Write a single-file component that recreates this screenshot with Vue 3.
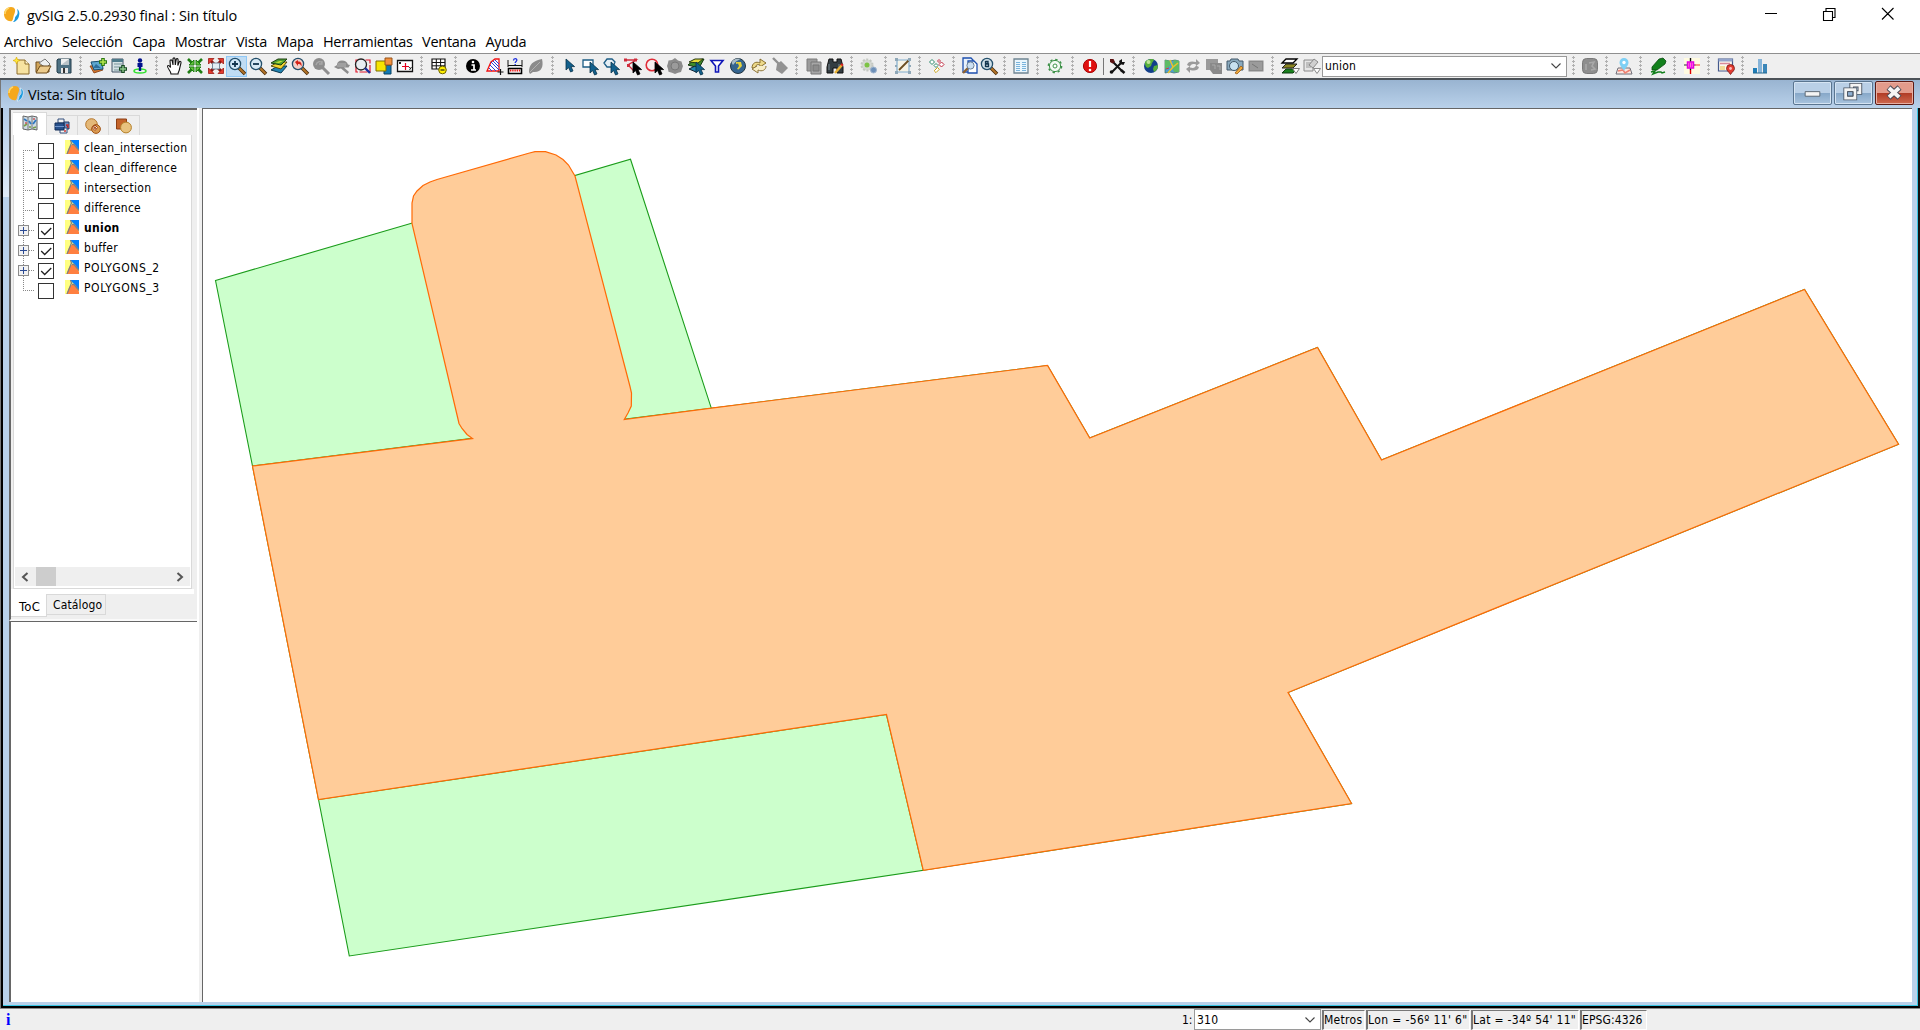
<script setup>
import { ref } from 'vue'

const lens = (fill, inner = '', handle = '#b5762a', edge = '#234f6b') =>
  `<path d="M12 12l6 6" stroke="#4a2c08" stroke-width="3.6"/><path d="M12 12l5.6 5.6" stroke="${handle}" stroke-width="2"/><circle cx="8" cy="8" r="5.6" fill="${fill}" stroke="${edge}" stroke-width="1.3"/>${inner}`
const cursor = (x, y, fill = '#12608c', edge = '#08324a') =>
  `<path transform="translate(${x} ${y})" d="M0 0v11l2.6-2.4 2 4.4 2.4-1.1-2-4.3h3.6z" fill="${fill}" stroke="${edge}" stroke-width=".8"/>`

const icons = {
  fresh: '<path d="M5 4h8l4 4v10H5z" fill="#f7e3a1" stroke="#8d6c2a"/><path d="M13 4v4h4" fill="#fff6d5" stroke="#8d6c2a"/><path d="M4.500 1l1 2.500 2.500 1-2.500 1-1 2.500-1-2.500-2.500-1 2.500-1z" fill="#ffe93b" stroke="#d9a800" stroke-width=".6"/>',
  open: '<path d="M3 16V6h4l1 2h8v8z" fill="#cfa45b" stroke="#6d4b1b"/><path d="M6 7l6-4 5 5-4 4z" fill="#eef0f0" stroke="#777"/><path d="M3 17l4-7h11l-4 7z" fill="#eccb8c" stroke="#6d4b1b"/>',
  save: '<path d="M4 3h13v14H4l-1-1V4z" fill="#4d7183" stroke="#253f4d"/><path d="M7 3h8v6H7z" fill="#eef0f0"/><path d="M7 9l8-6v6z" fill="#b9c3c8"/><path d="M7 12h7v5H7z" fill="#e8e8e8"/><path d="M9 12h2v5H9z" fill="#333"/>',
  addLayer: '<path d="M2 10l10-1 3 5-9 3z" fill="#d9752a" stroke="#7d3b10" stroke-width=".8"/><path d="M3 6l11-1 1 8-9 1z" fill="#5ea7cf" stroke="#174e70"/><path d="M5 12l3-4 5 4z" fill="#2d6f9c"/><path d="M15 2v8M11 6h8" stroke="#2c7a12" stroke-width="3.600"/><path d="M15 3v6M12 6h6" stroke="#b4e44e" stroke-width="1.600"/>',
  addTable: '<path d="M3 3h11v13H3z" fill="#d6e2e4" stroke="#456"/><path d="M3 3h11v3H3z" fill="#4f7b8b"/><path d="M5 8h8M5 11h8M5 14h6" stroke="#7a959c"/><path d="M14 9v8M10 13h8" stroke="#174a22" stroke-width="3.600"/><path d="M14 10v6M11 13h6" stroke="#8fc98c" stroke-width="1.400"/>',
  person: '<path d="M10 13c4 0 6 1 6 2s-2 2-6 2-6-1-6-2 2-2 6-2z" fill="none" stroke="#2fe02f" stroke-width="1.500"/><circle cx="10" cy="4.500" r="2.200" fill="#00108c"/><path d="M7.500 7h5v4h-1.300v4H8.800v-4H7.500z" fill="#00108c"/>',
  hand: '<path transform="translate(1 0)" d="M6 18c0-3-4-6-3.500-8 1-1.500 2.500.5 3 1.500L5 5c0-1.500 2-1.500 2.200 0L8 9V3c0-1.500 2-1.500 2 0l.3 6 .9-5.500c.3-1.500 2-1 1.900.4L12.800 9.500l1.400-3.500c.6-1.300 2.200-.6 1.800.8L14.500 13c0 2-1.500 3-1.500 5z" fill="#fff" stroke="#111" stroke-width="1.100"/>',
  fit: '<path d="M3 3l5 5M17 3l-5 5M3 17l5-5M17 17l-5-5" stroke="#1f7d13" stroke-width="2.600"/><path d="M9 4v5H4zM11 4v5h5zM9 16v-5H4zM11 16v-5h5z" fill="#62c63a" stroke="#1f7d13"/>',
  expand: '<path d="M4 4l4 4M16 4l-4 4M4 16l4-4M16 16l-4-4" stroke="#8d1410" stroke-width="3"/><path d="M2.500 2.500h5.500l-5.500 5.500zM17.500 2.500h-5.500l5.500 5.500zM2.500 17.500h5.500l-5.500-5.500zM17.500 17.500h-5.500l5.500-5.500z" fill="#e33b2e" stroke="#9c1a14" stroke-width=".8"/><path d="M6.500 7h7v6h-7z" fill="#e4eef4" stroke="#789"/>',
  zoomIn: lens('#cfe6f6', '<path d="M8 5v6M5 8h6" stroke="#12354e" stroke-width="1.800"/>'),
  zoomOut: lens('#d7e9f4', '<path d="M5 8h6" stroke="#12354e" stroke-width="1.800"/>'),
  layers: '<path d="M2 14l7-4h9l-6 7z" fill="#2183b0" stroke="#0d3850"/><path d="M2 10l7-4h9l-6 7z" fill="#f4d62f" stroke="#534a10"/><path d="M2 7l7-4h9l-6 6z" fill="#4f9e31" stroke="#1d3f10"/><path d="M6 6.500l5-1.500 3 0-4 2z" fill="#c7e23a"/>',
  zoomPrev: lens('#f3cfc8', '<path d="M5 6l3-2v1.500c3 0 4 2 3.500 5C10.500 8.500 10 8 8 8v2z" fill="#d42217"/>'),
  zoomGrey: '<path d="M11 11l7 7" stroke="#8f8f8f" stroke-width="3"/><circle cx="8" cy="8" r="6" fill="#8d8d8d"/><path d="M5 9c1-4 5-4 6-2M11 5v3H8" fill="none" stroke="#a8a8a8" stroke-width="1.400"/>',
  turtle: '<path d="M2 11l3-2c0-3 2-4.500 5-4.500s5 1.500 6 4l2 .5-1.500 2.500H12l5 4.500-1.500 2L9 12.500 6 13z" fill="#8c8c8c"/><path d="M6 8h8M5 10h9" stroke="#b4b4b4"/>',
  zoomSel: '<path d="M3 4h14v12H3z" fill="none" stroke="#e0182c" stroke-width="1.200" stroke-dasharray="8 1.500"/><circle cx="8" cy="8.500" r="5.500" fill="#e8eef2" stroke="#222" stroke-width="1.300"/><path d="M12 12l5 5" stroke="#1b2f9a" stroke-width="2.400"/>',
  frames: '<path d="M10 9h7v9h-7z" fill="#1179b3" stroke="#084264"/><path d="M2 5h10v10H2z" fill="#f6e500" stroke="#7a6d00"/><path d="M11 2h7v7h-7z" fill="#f2913d" stroke="#96521a"/>',
  coords: '<path d="M2.500 4.500h15v11h-15z" fill="#fff" stroke="#111" stroke-width="1.300"/><path d="M10.500 7v7M7 10.500h7" stroke="#e3001b" stroke-width="1.200"/><path d="M4 6l2 2M6 6L4 8M14 11l1.200 1.500M16.500 11l-2 3" stroke="#111" stroke-width=".9"/>',
  grid: '<path d="M3 3h13v10H3z" fill="#fff" stroke="#111" stroke-width="1.200"/><path d="M3 6.500h13M3 9.800h13M7.300 3v10M11.600 3v10" stroke="#111"/><circle cx="13.500" cy="14" r="3.800" fill="#ffef00" stroke="#6b6200"/><path d="M11.500 14h4" stroke="#222" stroke-width="1.200"/>',
  info: '<circle cx="10" cy="10" r="7" fill="#000"/><path d="M8.500 9h2.500v5M8 14h5" stroke="#fff" stroke-width="1.700" fill="none"/><circle cx="10" cy="6" r="1.300" fill="#fff"/>',
  area: '<path d="M3 15l4-9 4-3h4v12z" fill="#fff" stroke="#f01414" stroke-width="1.300"/><path d="M6 9l6 6M7 6l8 8M9 5l6 6M11 4l4 4M5 12l3 3" stroke="#2f3ed6"/><path d="M16.500 13v6M13.500 16h6" stroke="#111" stroke-width="1.200"/>',
  measure: '<path d="M3.500 12.500h13v5h-13z" fill="#fff" stroke="#000" stroke-width="1.600"/><path d="M5 14.500h10" stroke="#e81a1a" stroke-width="2" stroke-dasharray="1.400 .8"/><path d="M3 4v7M17 4v7M3 9.500h14" stroke="#111"/><path d="M8.500 4.500C8.500 2 12 2 11.800 4.300c0 1.200-1.600 1.200-1.600 2.700M10.200 8v1" fill="none" stroke="#1d2fe0" stroke-width="1.300"/>',
  leaf: '<path d="M3 16c0-8 4-11 13-13 2 8-1 14-9 13l-3 2z" fill="#8b8b8b"/><path d="M4 16L14 6" stroke="#b1b1b1"/>',
  pointer: cursor(6, 3),
  selRect: '<path d="M2 4h10v7H2z" fill="#fff" stroke="#1d5d85" stroke-width="1.300"/>' + cursor(9, 6),
  selPoly: '<path d="M2 7l3-4h5l3 3-2 5H5z" fill="#e4eef4" stroke="#1d5d85" stroke-width="1.300"/>' + cursor(9, 6),
  selLine: '<path d="M2 4h11L5 9l6 6" fill="none" stroke="#cf2d3c" stroke-width="1.400"/><path d="M1 2.500h3v3H1zM11 2.500h3v3h-3zM4 8h3v3H4z" fill="#cf2d3c"/>' + cursor(10, 6, '#000', '#000'),
  selCircle: '<circle cx="8" cy="9" r="5.800" fill="#f6eeee" stroke="#e12c38" stroke-width="1.600"/>' + cursor(11, 6, '#000', '#000'),
  greyDot: '<path d="M10 2l3 2.500 3.500 1 1 3.500L18 10l-1 3-1 3-3 .8L10 18l-3-1.200-3.500-1L3 13l-1-3 1-3 .5-2.500L7 4z" fill="#8c8c8c"/><circle cx="10" cy="10" r="4" fill="#9b9b9b" stroke="#777"/>',
  selLayers: '<path d="M2 9l6-5 10-1-5 9z" fill="#3e8b2a" stroke="#14300e"/><path d="M3 6l6-3h8l-5 4z" fill="#e8db3a" stroke="#253b10"/><path d="M3 13l6-3 5 3-4 3z" fill="#2183b0" stroke="#123"/>' + cursor(10, 6),
  funnel: '<path d="M4 4.500h12L11.500 10v6h-3v-6z" fill="#fff" stroke="#0f16b8" stroke-width="1.600"/>',
  globe: '<circle cx="10" cy="10" r="7.500" fill="#34648f" stroke="#23343f"/><path d="M3.500 6.500a7.500 7.500 0 0 1 9-3.500L8 5.500 5 9z" fill="#a9bcc8"/><path d="M8 6l5 0 1 4-3.500 3.500L9 13l2-3-1-2.500-2 .5z" fill="#e3d13c"/>',
  cycle: '<path d="M3 12c0-5 4-7 8-5V3l6 4-6 4V9c-3-1-4 0-5 3z" fill="#edd98a" stroke="#7d6320" stroke-width=".9"/><path d="M17 10c0 4-4 6-8 4v3l-6-4 5-3" fill="#f7edc6" stroke="#8d743a"/>',
  broom: '<path d="M3 2l6 6" stroke="#909090" stroke-width="2.400"/><path d="M7 8l4-3 7 7-6 6-6-4z" fill="#929292"/>',
  copies: '<path d="M3 3h10v12H3z" fill="#9b9b9b" stroke="#7d7d7d"/><path d="M7 6h10v12H7z" fill="#a6a6a6" stroke="#777"/><path d="M9 9h6v6H9z" fill="#8d8d8d" stroke="#777"/>',
  binoc: '<path d="M4 3h4v3h4V3h4l2 8v6h-6v-5H8v5H2v-6z" fill="#333d42" stroke="#111"/><path d="M4 8v6M14 8v5" stroke="#78868d"/><path d="M10 17l7-8" stroke="#e9b236" stroke-width="2.400"/><path d="M16 8l2 1.500" stroke="#d22" stroke-width="2"/>',
  gears: '<circle cx="8" cy="9" r="5.500" fill="#d4d8d2" stroke="#c4c8c2" stroke-dasharray="2 1.500" stroke-width="2"/><circle cx="8" cy="9" r="2.500" fill="#7cc344"/><circle cx="14.500" cy="14" r="3" fill="#6d90b8" stroke="#9fb4ce"/>',
  editBox: '<path d="M4 4h12v12H4z" fill="#f6f3e6" stroke="#80add0" stroke-width="1.200"/><path d="M6 14L16 4" stroke="#6a4d20" stroke-width="1.800"/><path d="M2 2h3v3H2zM15 2h3v3h-3zM2 15h3v3H2zM15 15h3v3h-3zM2 9h2v2H2zM16 9h2v2h-2z" fill="#8fa8b8"/>',
  nodes: '<g fill="#fff" stroke-width="1"><path d="M5 3.500l2.500 2.500L5 8.500 2.500 6z" stroke="#2b8a6a"/><path d="M9 7.500l2 2-2 2-2-2z" stroke="#2b8a6a"/><path d="M14.500 6l2.500 2.500-2.500 2.500L12 8.500z" stroke="#c02a40"/><path d="M12 3.500l1.500 1.500L12 6.500 10.500 5z" stroke="#c02a40"/><path d="M10.500 11.500l1.800 1.800-3.300 3.300-1.800-1.800z" stroke="#caa41a"/></g>',
  docZoom: '<path d="M3 2h8l2 2v12H3z" fill="#e9f1fb" stroke="#1d4fae" stroke-width="1.300"/><path d="M8 5h6l3 3v9H8z" fill="#fff" stroke="#1d4fae" stroke-width="1.300"/><path d="M8 12l-5 5" stroke="#8c6232" stroke-width="2.400"/><circle cx="10.500" cy="9.500" r="3.600" fill="#cde0f3" stroke="#6b7f96"/>',
  boldZoom: lens('#cfe0e8', '<path d="M6.500 5v6M6.500 5.500h2.500v2H6.500M6.500 8h3v2.500h-3" fill="none" stroke="#12354e" stroke-width="1.300"/>'),
  table: '<path d="M3 3h14v14H3z" fill="#eaf6fd" stroke="#6f8592" stroke-width="1.300"/><path d="M5 6.500h4M5 8.500h4M5 10.500h4M5 12.500h4M5 14.500h4M11 6.500h4M11 8.500h4M11 10.500h4M11 12.500h4M11 14.500h4" stroke="#79b4dc"/>',
  gear: '<circle cx="10" cy="10" r="5.600" fill="#f4faf4" stroke="#3d9148" stroke-width="1"/><circle cx="10" cy="10" r="6.600" fill="none" stroke="#3d9148" stroke-width="1.500" stroke-dasharray="2.400 2.780"/><circle cx="10" cy="10" r="2" fill="#fff" stroke="#3d9148"/>',
  alert: '<circle cx="10" cy="10" r="6.600" fill="#e01010" stroke="#a80808"/><path d="M10 5v6" stroke="#fff" stroke-width="2.200"/><circle cx="10" cy="14" r="1.300" fill="#fff"/>',
  tools: '<path d="M4.500 16.500L14 7M6 6l9 9" stroke="#111" stroke-width="2"/><path d="M3 3l3.500 0 1.500 3-2.500 1.500L3 6z" fill="#5a1010"/><path d="M13 8l-1-3 3-2v3l3 0-1.500 3z" fill="#111"/><circle cx="4.500" cy="16" r="1.800" fill="#111"/><path d="M14 14l3.500 3" stroke="#111" stroke-width="2.600"/>',
  earth: '<circle cx="10" cy="10" r="7" fill="#123f8a"/><path d="M4 6c2-3 8-4 9-2l-2 3-1 3-3 2c-3-1-3-4-3-6zM13 10l4-1c0 4-2 6-4 7l-1-3z" fill="#58b03a"/><circle cx="7.500" cy="6" r="2" fill="#d8f0b0" opacity=".8"/>',
  worldMap: '<path d="M3 4l5 1 5-1 4 1v11l-5 1-4-1-5 1z" fill="#4f9fd0" stroke="#3d6d5a" stroke-width=".7"/><path d="M3 4l5 1 0 5-5 3zM12 4l5 1v11h-5l-2-5z" fill="#5fbb65"/><path d="M8 4l3 7 5-4M11 11l-5 6" stroke="#e9c22c" stroke-width="1.500" fill="none"/><path d="M4 13l3-1" stroke="#d33"/>',
  syncGrey: '<path d="M4 9c1-4 5-4 9-3V3l4 4-4 3V8.500c-4-1-5 0-6 2zM16 11c-1 4-5 4-9 3v3l-4-4 4-3v1.500c4 1 5 0 6-2z" fill="#9a9a9a"/>',
  stackGrey: '<path d="M2 3h12v11H2z" fill="#9a9a9a"/><path d="M6 7h12v11H9l-3-4z" fill="#8a8a8a"/><path d="M8 9h3v4M13 10h3v4" fill="none" stroke="#aaa"/>',
  camera: '<path d="M2 5h3l1-2h7l1 2h4v9H2z" fill="#89a9bd" stroke="#42596a"/><circle cx="9" cy="10" r="4.500" fill="#c7e1f0" stroke="#42596a"/><path d="M10 17l6-7 2 2-6 6z" fill="#f0a93c" stroke="#995c12" stroke-width=".8"/>',
  cardGrey: '<path d="M2.500 4.500h15v11h-15z" fill="#8a8a8a"/><path d="M4 6h12v8H4z" fill="#9b9b9b"/><path d="M6 8l6 4" stroke="#777"/>',
  stack: '<path d="M2 17l4-4h11l-4 4z" fill="#18801c" stroke="#0d3a10"/><path d="M2 12l4-4h11l-4 4z" fill="#8a8420" stroke="#222"/><path d="M2 7l4-4h11l-4 4z" fill="#fff" stroke="#000" stroke-width="1.300"/><path d="M12.500 12.500h7l-3.500 5z" fill="#fff" stroke="#777"/>',
  stackEdit: '<path d="M3 4h9v11H3z" fill="#e6e6e6" stroke="#8a8a8a"/><path d="M5 7h5M5 9h5M5 11h5" stroke="#999"/><path d="M8 9l5-6 4 3-5 6z" fill="#d0d0d0" stroke="#8a8a8a"/><path d="M12.500 12.500h7l-3.500 5z" fill="#fff" stroke="#888"/>',
  greyBlock: '<rect x="2.500" y="2.500" width="15" height="15" rx="4" fill="#8e8e8e" stroke="#7a7a7a"/><path d="M6 8v6M9 7l5-1-2 4 3 3-4 1" fill="none" stroke="#a9a9a9" stroke-width="1.600"/>',
  pinMap: '<path d="M4 12h12l2 6H2z" fill="#fbe7e0" stroke="#6f6f78"/><path d="M4 15l5-1 2 3 5-3" stroke="#f08070" fill="none" stroke-width="1.600"/><path d="M10 15C8 11 5.500 9.500 5.500 6.500a4.500 4.500 0 0 1 9 0C14.500 9.500 12 11 10 15z" fill="#7fd0f5"/><circle cx="10" cy="6.500" r="1.700" fill="#fff"/>',
  marker: '<path d="M4 11L11 3l4-1 3 3-1 3-8 6H4z" fill="#12801c" stroke="#0a4a10" stroke-width=".8"/><path d="M3 16l4-1-2 3 5-2 3 0 1 1 3-1" fill="none" stroke="#12801c" stroke-width="1.500"/>',
  snap: '<path d="M2 2h16v16H2z" fill="#fffbe0"/><path d="M8.500 2v12" stroke="#111" stroke-width="1.400"/><path d="M8.500 14v4" stroke="#e00000" stroke-width="1.400"/><path d="M2 9h12" stroke="#777" stroke-width="1.600"/><path d="M13 9h5" stroke="#f08070" stroke-width="1.600"/><path d="M5.500 6h6v6h-6z" fill="#f7c" stroke="#e000e0" stroke-width="1.500"/><path d="M7.500 7v4M9.500 7v4" stroke="#f0f"/>',
  formPin: '<path d="M2.500 3h14v12h-14z" fill="#fbf7ee" stroke="#44598c" stroke-width="1.200"/><path d="M2.500 3h14v2.500h-14z" fill="#93a4cc"/><path d="M4 7.500h10" stroke="#d98a9a" stroke-width="1.500"/><path d="M4 10h5v4H4z" fill="#f2dc9a"/><path d="M14.500 18.500c-2-3-4-4-4-6a4 4 0 0 1 8 0c0 2-2 3-4 6z" fill="#e23a30" stroke="#761814" stroke-width=".8"/><circle cx="14.500" cy="12.500" r="1.400" fill="#fbb"/>',
  bars: '<path d="M3 12h4v5H3z" fill="#1f7db6"/><path d="M8 3h4v14H8z" fill="#86b4d8"/><path d="M13 8h4v9h-4z" fill="#3b86b8"/><path d="M3 17h14" stroke="#23698f"/>'
}

const toolbars = [
  ['fresh', 'open', 'save'],
  ['addLayer', 'addTable', 'person'],
  ['hand', 'fit', 'expand', 'zoomIn', 'zoomOut', 'layers', 'zoomPrev', 'zoomGrey', 'turtle', 'zoomSel', 'frames', 'coords'],
  ['grid'],
  ['info', 'area', 'measure', 'leaf'],
  ['pointer', 'selRect', 'selPoly', 'selLine', 'selCircle', 'greyDot', 'selLayers', 'funnel', 'globe', 'cycle', 'broom'],
  ['copies', 'binoc'],
  ['gears'],
  ['editBox'],
  ['nodes'],
  ['docZoom', 'boldZoom'],
  ['table'],
  ['gear'],
  ['alert', '|', 'tools'],
  ['earth', 'worldMap', 'syncGrey', 'stackGrey', 'camera', 'cardGrey'],
  ['stack', 'stackEdit', 'combo'],
  ['greyBlock'],
  ['pinMap'],
  ['marker'],
  ['snap'],
  ['formPin'],
  ['bars']
]

const menus = ['Archivo', 'Selección', 'Capa', 'Mostrar', 'Vista', 'Mapa', 'Herramientas', 'Ventana', 'Ayuda']

const layers = ref([
  { name: 'clean_intersection', on: false },
  { name: 'clean_difference', on: false },
  { name: 'intersection', on: false },
  { name: 'difference', on: false },
  { name: 'union', on: true, active: true },
  { name: 'buffer', on: true },
  { name: 'POLYGONS_2', on: true },
  { name: 'POLYGONS_3', on: false }
])
</script>

<template>
  <div class="app">
    <header class="titlebar">
      <svg class="logo" viewBox="0 0 16 16"><path d="M7 0c4 0 5 3 3.500 6.500S9.500 12 8 14c-4 1-8-2-8-7 0-4 3-7 7-7z" fill="#f5a81c"/><path d="M5 1c-3 1-4 3-4 6" stroke="#ffd86b" stroke-width="1.500" fill="none"/><path d="M13 2c2 1 3 4 2 7-1 4-4 6-6 6 3-3 1-4 3-6s2-4 1-7z" fill="#1c9ade"/></svg>
      <span class="title">gvSIG 2.5.0.2930 final : Sin título</span>
      <svg class="winctl" viewBox="0 0 140 20"><path d="M5 8.500h12M63.500 6.500h9v9h-9zM66 6V3.500h9v9h-2.500M122 3l11.500 11.500M133.500 3L122 14.500" fill="none" stroke="#000" stroke-width="1.100"/></svg>
    </header>
    <nav class="menubar"><span v-for="m in menus" :key="m">{{ m }}</span></nav>

    <div class="toolbar">
      <div v-for="(group, g) in toolbars" :key="g" class="group" :class="'g' + g">
        <i class="grip"></i>
        <template v-for="name in group" :key="name">
          <i v-if="name === '|'" class="sep"></i>
          <div v-else-if="name === 'combo'" class="combo">
            <span>union</span>
            <svg viewBox="0 0 10 6"><path d="M.5.500L5 5 9.500.500" fill="none" stroke="#444" stroke-width="1.100"/></svg>
          </div>
          <span v-else class="tool" :class="{ active: name === 'zoomIn' }">
            <svg viewBox="0 0 20 20" fill="none" v-html="icons[name]"></svg>
          </span>
        </template>
      </div>
    </div>

    <main class="frame">
      <div class="frame-title">
        <svg class="logo" viewBox="0 0 16 16"><path d="M7 0c4 0 5 3 3.500 6.500S9.500 12 8 14c-4 1-8-2-8-7 0-4 3-7 7-7z" fill="#f5a81c"/><path d="M5 1c-3 1-4 3-4 6" stroke="#ffd86b" stroke-width="1.500" fill="none"/><path d="M12 2c3 1 4 4 3 7-1 4-4 6-6 6 3-3 1-4 3-6s1-4 0-7z" fill="#1c9ade" stroke="#fff" stroke-width=".6"/></svg>
        <span class="title">Vista: Sin título</span>
        <div class="frame-ctl">
          <b><svg viewBox="0 0 39 24"><path d="M11.500 10.500h16v5h-16z" fill="#f4f4f4" stroke="#55606c"/></svg></b>
          <b><svg viewBox="0 0 39 24"><g fill="none"><path d="M17.500 3.500h9v8h-9z" stroke="#4b5563" stroke-width="5"/><path d="M17.500 3.500h9v8h-9z" stroke="#f4f4f4" stroke-width="3"/><path d="M11 8.500h10v9H11z" fill="#8fb0d2" stroke="#4b5563" stroke-width="5"/><path d="M11 8.500h10v9H11z" stroke="#f4f4f4" stroke-width="3.200"/><path d="M13 10.500h6v5h-6z" stroke="#4b5563"/></g></svg></b>
          <b class="close"><svg viewBox="0 0 39 24"><path d="M13 6l12 11M25 6L13 17" stroke="#4a4a55" stroke-width="6.400"/><path d="M13.500 6.500l11 10M24.500 6.500l-11 10" stroke="#f6f6f6" stroke-width="4.300"/></svg></b>
        </div>
      </div>

      <div class="frame-body">
        <aside class="side">
          <section class="toc">
            <div class="tabs">
              <span class="tab on"><svg viewBox="0 0 16 16"><path d="M1 1l5 1 4-1 5 1v13l-5-1-4 1-5-1z" fill="#cfdce4" stroke="#666"/><path d="M6 2v13M10 1v13" stroke="#777"/><path d="M2 4l3 2M7 6l2 3M11 9l3-4" stroke="#2f77c0" stroke-width="1.800"/><path d="M2 11l3-2M11 13l3-1M7 12l2 0" stroke="#78a04a" stroke-width="1.600"/><path d="M4 7v2M12 3v2" stroke="#c44" stroke-width="1.300"/></svg></span>
              <span class="tab"><svg viewBox="0 0 16 16"><path d="M4 1h6v4H4z" fill="#f3f3f3" stroke="#334f7c"/><path d="M10 4h5v7h-5z" fill="#6f8fc0" stroke="#233c66"/><path d="M6 10h7v5H6z" fill="#f6f6f6" stroke="#334f7c"/><path d="M1 5h9v7H1z" fill="#27508c" stroke="#152e58"/><path d="M1 8.500h9" stroke="#7095cc"/><path d="M12 7h2v3M10 13h2" stroke="#c33" stroke-width="1.500"/></svg></span>
              <span class="tab"><svg viewBox="0 0 16 16"><circle cx="6.500" cy="6.500" r="5.800" fill="#e4b878" stroke="#b5762a"/><circle cx="11" cy="11" r="4.400" fill="#d99a50" stroke="#a3561a"/><path d="M10 7l2.500 2.500L10 12.500 7.500 10z" fill="#fff" stroke="#a3461a"/><circle cx="10" cy="9.800" r="1.200" fill="#b3541c"/></svg></span>
              <span class="tab"><svg viewBox="0 0 16 16"><path d="M.5 1h10v10H.5z" fill="#c4642a" stroke="#8d3f14"/><circle cx="10" cy="9.500" r="5.400" fill="#e8c27e" stroke="#b5812a"/></svg></span>
            </div>
            <div class="tree-pane">
              <ul class="tree">
                <li v-for="l in layers" :key="l.name" :class="{ active: l.active }">
                  <span class="branch"><i v-if="l.on" class="plus"></i></span>
                  <span class="check"><svg v-if="l.on" viewBox="0 0 16 16"><path d="M2.500 8l4 4L14 4.500" fill="none" stroke="#222" stroke-width="1.500"/></svg></span>
                  <svg class="sym" viewBox="0 0 14 14"><path d="M0 0h14v14H0z" fill="#ffff80"/><path d="M5 0h9v10L9 4z" fill="#0080ff"/><path d="M1.500 14L4 8l1.500-2.500L9 4l2 2 3 6v2z" fill="#ff8040"/><path d="M5.500 0l1 3-1 2.500L2 14M7 4.500l2 0 5 6" fill="none" stroke="#808080" stroke-width="1.300"/></svg>
                  <span class="name" :class="{ caps: l.name.startsWith('P') }">{{ l.name }}</span>
                </li>
              </ul>
              <div class="hscroll">
                <svg viewBox="0 0 8 10"><path d="M6.500 1L2 5l4.500 4" fill="none" stroke="#555" stroke-width="2"/></svg>
                <i class="thumb"></i>
                <svg class="right" viewBox="0 0 8 10"><path d="M1.500 1L6 5 1.500 9" fill="none" stroke="#555" stroke-width="2"/></svg>
              </div>
            </div>
            <div class="btabs"><span class="on">ToC</span><span>Catálogo</span></div>
          </section>
          <section class="locator"></section>
        </aside>

        <section class="map">
          <svg viewBox="203 109 1708 894">
            <g fill="#ccffcc" stroke="#1a9c1a" stroke-width="1.100">
              <path d="M215.500 280.500L630.500 159.300 711.300 408.200 252.500 466z"/>
              <path d="M318.500 799.500L886.500 714.500 923.300 870.300 349.300 956z"/>
              <path d="M252.500 466L318.500 799.500M923.300 870.300L1351.500 803.500 1288 692.500 1898.500 444.300 1804.500 289.500 1381.500 460 1317.500 347.500 1089.700 438 1047.500 365.500 711.300 408.200" fill="none"/>
            </g>
            <path d="M252.500 466L472.500 438.500 467 434.500 462 428.500 459 423.500 457.500 417 412 223.500V203L413.500 196 417 191 423 185.500 430 182 437 179.500 529.500 153 535 151.700 545.500 151.700 556 155 563 159.500 568.500 165 572 171 575 176 630 386.500 631.500 393 631.300 406 628 413 624.300 419.500 711.300 408.200 1047.500 365.500 1089.700 438 1317.500 347.500 1381.500 460 1804.500 289.500 1898.500 444.300 1288 692.500 1351.500 803.500 923.300 870.300 886.500 714.500 318.500 799.500z" fill="#ffcc99" stroke="#ff6a06" stroke-width="1.200"/>
          </svg>
        </section>
      </div>
    </main>

    <footer class="status">
      <span class="i">i</span>
      <span class="scale">1:</span>
      <div class="combo small"><span>310</span><svg viewBox="0 0 10 6"><path d="M.5.500L5 5 9.500.500" fill="none" stroke="#444" stroke-width="1.100"/></svg></div>
      <span class="cell c1">Metros</span>
      <span class="cell c2">Lon = -56º 11' 6"</span>
      <span class="cell c3">Lat = -34º 54' 11"</span>
      <span class="cell c4">EPSG:4326</span>
    </footer>
  </div>
</template>

<style>
body { background: #fff; overflow: hidden; }
</style>

<style scoped>
* { box-sizing: border-box; }
.app { width: 1920px; height: 1030px; display: flex; flex-direction: column; background: #fff; color: #000; font: 12px "DejaVu Sans Condensed", "DejaVu Sans", sans-serif; overflow: hidden; white-space: nowrap; }
svg { display: block; }
.titlebar { height: 30px; display: flex; align-items: center; padding-left: 4px; }
.logo { width: 16px; height: 16px; flex: none; }
.title { font: 14.500px "Open Sans", "Noto Sans", sans-serif; margin-left: 7px; }
.titlebar .title { letter-spacing: -.13px; }
.winctl { width: 140px; height: 20px; margin: -1px 20px 0 auto; }
.menubar { height: 23px; display: flex; align-items: center; gap: 9.500px; padding-left: 4px; font: 14.500px/23px "Open Sans", "Noto Sans", sans-serif; letter-spacing: -.28px; }

.toolbar { height: 27px; display: flex; align-items: center; background: #efefef; border-top: 1px solid #8f8f8f; border-bottom: 2px solid #4c5258; }
.group { display: flex; align-items: center; height: 24px; }
.grip { width: 13px; height: 20px; flex: none; background: radial-gradient(circle at 6.500px 1.500px, #b0b0b0 1px, transparent 1.400px) 0 0 / 13px 4px; }
.g0 .grip { width: 11px; background-position: -2px 0; }
.g16 .grip { width: 12px; }
.tool { width: 21px; height: 21px; display: flex; align-items: center; justify-content: center; }
.tool svg { width: 20px; height: 20px; flex: none; }
.tool.active { background: #c0dcf3; border: 1px solid #90c8f6; }
.g10 .tool { width: 19px; }
.g11 .tool { width: 20px; }
.g12 .tool { width: 22px; }
.sep { width: 1px; height: 17px; margin: 0 2.500px; background: #777; }
.combo { width: 245px; height: 21px; display: flex; align-items: center; justify-content: space-between; padding: 0 5px 0 2px; background: #fff; border: 1px solid #9a9a9a; letter-spacing: .2px; }
.combo svg { width: 10px; height: 6px; }
.g15 .combo { margin-left: 1px; }

.frame { height: 928px; display: flex; flex-direction: column; border-left: 1px solid #777; }
.frame-title { height: 28px; display: flex; align-items: center; padding-left: 7px; background: linear-gradient(#99b4d1, #b9d1ea); border-left: 0; }
.frame-title .title { margin-left: 4px; letter-spacing: -.17px; }
.frame-ctl { display: flex; gap: 2px; margin: -2px 6px 0 auto; }
.frame-ctl b { width: 39px; height: 24px; border: 1px solid #5a7590; border-radius: 2px; box-shadow: inset 0 0 0 1px #d5e4f3; background: linear-gradient(#b9cfe6 0 48%, #86a7c8 50%, #a9c4de); }
.frame-ctl svg { width: 37px; height: 22px; }
.frame-ctl .close { border-color: #5c1a14; box-shadow: inset 0 0 0 1px #e8b0a4; background: linear-gradient(#e39b8b 0 48%, #b03a24 50%, #cf6a50); }
.frame-body { height: 900px; display: flex; padding: 0 6px 4px 6px; background: linear-gradient(#b4cce6, #dfeaf6) 0 0 / 8px 89px no-repeat, #b9d1ea; border-left: 2px solid #000; border-right: 2px solid #111; border-bottom: 2px solid #000; box-shadow: inset -1px -1px #38c6e4; }
.side { width: 193px; height: 894px; display: flex; flex-direction: column; background: #fff; border-right: 3px solid #efefef; }
.toc { width: 188px; height: 513px; border-left: 2px solid #666; border-top: 2px solid #666; background: #efefef; padding-top: 2px; display: flex; flex-direction: column; border-bottom: 2px solid #fafafa; }
.tabs { height: 23px; display: flex; margin-left: 2px; align-items: flex-end; }
.tab { width: 31px; height: 20px; display: flex; align-items: center; justify-content: center; border: 1px solid #d9d9d9; border-left: 0; border-bottom: 0; }
.tab.on { width: 34px; height: 23px; background: #fff; padding-bottom: 2px; }
.tab svg { width: 16px; height: 16px; }
.tree-pane { width: 179px; height: 454px; margin-left: 2px; background: #fff; border: 1px solid #d9d9d9; border-top: 0; display: flex; flex-direction: column; justify-content: space-between; }
.tree { margin: 1px 0 0; padding: 0; list-style: none; }
.tree li { height: 20px; display: flex; align-items: flex-start; }
.branch { width: 24px; height: 20px; padding: 9px 0 0 4px; background: repeating-linear-gradient(90deg, #888 0 1px, transparent 1px 2px) 9px 14px / 11px 1px no-repeat, repeating-linear-gradient(#888 0 1px, transparent 1px 2px) 9px 0 / 1px 20px no-repeat; }
li:first-child .branch { background-position: 9px 14px, 9px 14px; }
li:last-child .branch { background-size: 11px 1px, 1px 14px; }
.plus { display: block; width: 11px; height: 11px; border: 1px solid #8c8c8c; background: linear-gradient(#2c4b94, #2c4b94) 1px 4px / 7px 1px no-repeat, linear-gradient(#2c4b94, #2c4b94) 4px 1px / 1px 7px no-repeat, #f2f2f2; }
.check { width: 16px; height: 16px; margin-top: 7px; border: 1px solid #333; background: #fff; }
.check svg { width: 14px; height: 14px; }
.sym { width: 14px; height: 14px; margin: 4px 0 0 11px; }
.name { margin-left: 5px; line-height: 24px; letter-spacing: .27px; }
.caps { letter-spacing: .57px; }
.active .name { font-weight: bold; }
.hscroll { height: 19px; margin: 0 1px 2px; display: flex; align-items: center; background: #efefef; }
.hscroll svg { width: 8px; height: 10px; margin-left: 6px; }
.thumb { width: 20px; height: 19px; margin-left: 7px; background: #cdcdcd; }
.hscroll .right { margin: 0 6px 0 auto; }
.btabs { height: 29px; padding-top: 5px; display: flex; background: linear-gradient(#fff, #fff) 0 0 / 183px 5px no-repeat; letter-spacing: .15px; }
.btabs span { height: 21px; width: 59px; line-height: 20px; padding-left: 6px; border: 1px solid #d9d9d9; border-left: 0; }
.btabs .on { width: 36px; height: 23px; background: #fff; border-top: 0; line-height: 25px; padding-left: 8px; font-size: 13px; letter-spacing: .3px; }
.locator { width: 188px; height: 381px; border: 1px solid #666; border-left-width: 2px; border-right: 0; border-bottom: 0; background: #fff; }
.map { flex: 1; height: 894px; background: #fff; border-left: 1px solid #666; border-top: 1px solid #666; }
.map svg { width: 1708px; height: 894px; }

.status { height: 22px; display: flex; align-items: center; background: #efefef; border-top: 1px solid #8a8a8a; }
.i { width: 1182px; padding-left: 6px; font: bold 16px "Liberation Serif", serif; color: #00f; }
.scale { width: 12px; }
.small { width: 127px; height: 21px; margin-right: 1px; }
.cell { height: 20px; line-height: 19px; border: 1px solid #fff; border-top: 1px solid #777; border-left: 2px solid #777; margin-right: 1px; letter-spacing: .3px; }
.c1 { width: 43px; } .c2 { width: 104px; letter-spacing: .38px; } .c3 { width: 108px; letter-spacing: .3px; } .c4 { width: 67px; letter-spacing: .1px; }
</style>
